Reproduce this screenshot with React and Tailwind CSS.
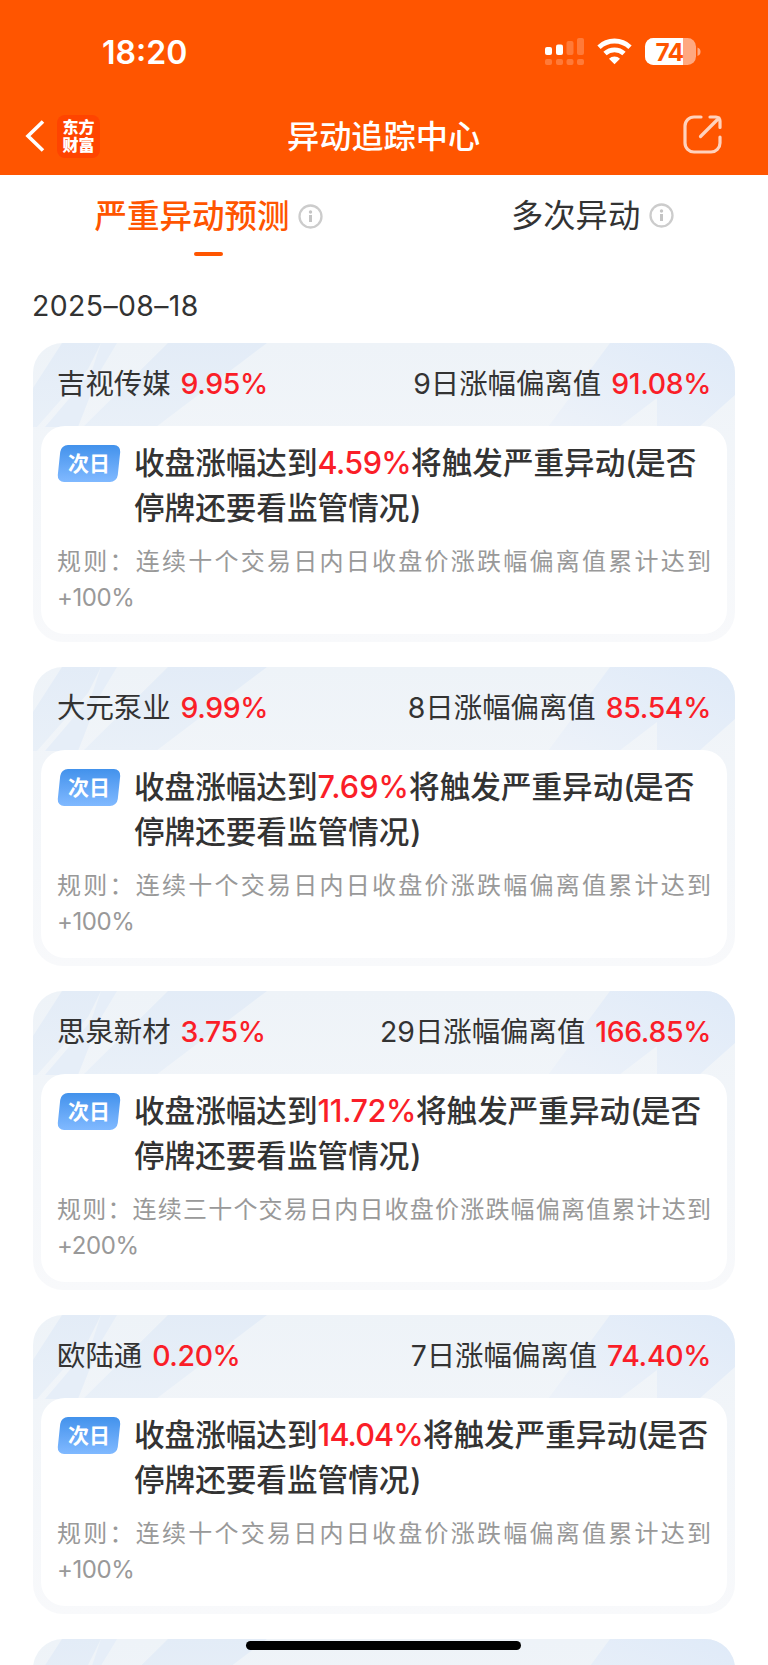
const cards = [
  { name: '吉视传媒', pct: '9.95%', days: '9日', dev: '91.08%', trig: '4.59%', n: '十', lim: '+100%', track: 'tracking-[-0.6px]' },
  { name: '大元泵业', pct: '9.99%', days: '8日', dev: '85.54%', trig: '7.69%', n: '十', lim: '+100%', track: 'tracking-[0.1px]' },
  { name: '思泉新材', pct: '3.75%', days: '29日', dev: '166.85%', trig: '11.72%', n: '三十', lim: '+200%', track: 'tracking-[-0.4px]' },
  { name: '欧陆通', pct: '0.20%', days: '7日', dev: '74.40%', trig: '14.04%', n: '十', lim: '+100%', track: 'tracking-[-0.85px]' },
  { empty: true },
];

function Stripes() {
  return (
    <svg className="absolute left-0 top-0" width="702" height="150" viewBox="0 0 702 150" fill="none">
      <defs>
        <linearGradient id="l" x1="0" y1="0" x2="0" y2="1">
          <stop offset="0" stopColor="#e3ecf7" />
          <stop offset="1" stopColor="#e9f0f8" />
        </linearGradient>
        <linearGradient id="r" x1="1" y1="0" x2="0" y2="1">
          <stop offset="0" stopColor="#dfeaf8" />
          <stop offset="1" stopColor="#edf2f9" />
        </linearGradient>
      </defs>
      <path d="M29 0H68L55 26L4 84H0V45Z" fill="url(#l)" />
      <path d="M68 0H84L66 30L45 84H12L58 30Z" fill="#e6eef8" />
      <path d="M135 0H234L123 84H50Z" fill="url(#l)" />
      <path d="M577 0H702V52L666 84H624V55L586 84H515Z" fill="url(#r)" />
    </svg>
  );
}

function Info() {
  return (
    <svg className="shrink-0" width="25" height="25" viewBox="0 0 25 25" fill="none">
      <circle cx="12.5" cy="12.5" r="11" stroke="#ccc" strokeWidth="2.3" />
      <circle cx="12.5" cy="8" r="1.7" fill="#c4c4c4" />
      <path d="M12.5 11v7" stroke="#c4c4c4" strokeWidth="3" />
    </svg>
  );
}

function Card({ c }) {
  return (
    <section className="relative h-[299.600px] shrink-0 overflow-hidden rounded-[30px] bg-linear-to-b from-[#eef3f8] to-[#f8f9fb] px-2">
      <Stripes />
      {!c.empty && (
        <>
          <header className="relative flex h-[83px] items-center justify-between px-4 pb-[0.500px] text-[28.4px] leading-[40px] text-[#333]">
            <div className="flex gap-[10px]">
              <span>{c.name}</span>
              <span className="font-medium tracking-[-0.4px] text-[#fa1e28]">{c.pct}</span>
            </div>
            <div className="flex gap-[10px]">
              <span>{c.days}涨幅偏离值</span>
              <span className="font-medium tracking-[-0.35px] text-[#fa1e28]">{c.dev}</span>
            </div>
          </header>
          <div className="relative h-[208.400px] rounded-[24px] bg-white px-4 pt-[14px]">
            <div className="flex">
              <div className="relative mt-[5px] flex h-[37px] w-[64px] shrink-0 items-center justify-center">
                <div className="absolute inset-y-0 left-[2px] right-[2px] -skew-x-6 rounded-[7px] bg-linear-to-b from-[#4292ec] to-[#80b9ff]" />
                <span className="relative text-[21px] font-bold leading-[37px] text-white">次日</span>
              </div>
              <p className="ml-[13px] whitespace-nowrap text-[30.6px] font-medium leading-[45px] text-[#333]">
                收盘涨幅达到<span className={`text-[#fa1e28] ${c.track}`}>{c.trig}</span>将触发严重异动<span className="tracking-[-1.500px]">(</span>是否<br />停牌还要看监管情况<span className="ml-px">)</span>
              </p>
            </div>
            <p className="mt-[14.500px] w-[654px] text-justify text-[24px] leading-[36px] text-[#999]">
              规则：连续{c.n}个交易日内日收盘价涨跌幅偏离值累计达到 <span className="tracking-[-0.400px]">{c.lim}</span>
            </p>
          </div>
        </>
      )}
    </section>
  );
}

export default function App() {
  return (
    <div className="relative flex h-[1665px] w-[768px] flex-col overflow-hidden bg-white font-['Inter','Noto_Sans_CJK_SC',sans-serif]">
      <div className="h-[175px] shrink-0 bg-[#ff5500] text-white">
        <div className="flex h-[104px] items-center pl-[102px] pr-[67px]">
          <span className="pt-[2px] text-[32px] font-semibold leading-[40px]">18:20</span>
          <svg className="ml-auto overflow-visible" width="156" height="36" viewBox="0 -4 156 36">
            <g fill="#fff">
              <rect x="0" y="9" width="7" height="8" rx="2" />
              <rect x="11" y="6.500" width="7" height="10.500" rx="2" />
              <g opacity=".22">
                <rect x="21.500" y="3" width="7" height="14" rx="2" />
                <rect x="32" y="0" width="7" height="17" rx="2" />
                <rect x="0" y="21" width="7" height="6" rx="2" />
                <rect x="11" y="21" width="7" height="6" rx="2" />
                <rect x="21.500" y="21" width="7" height="6" rx="2" />
                <rect x="32" y="21" width="7" height="6" rx="2" />
              </g>
            </g>
            <g fill="none" stroke="#fff" strokeWidth="4.800">
              <path d="M54 9.200a22.500 22.500 0 0 1 31 0" />
              <path d="M60 15.500a14 14 0 0 1 19 0" />
            </g>
            <path d="M64 20.800a8 8 0 0 1 11 0L69.500 26.200Z" fill="#fff" />
            <rect x="100" y="0" width="51" height="27" rx="8.500" fill="#ffa880" />
            <path d="M108.500 0H138V27H108.500a8.500 8.500 0 0 1-8.500-8.500V8.500a8.500 8.500 0 0 1 8.500-8.500Z" fill="#fff" />
            <path d="M152.500 9.500a4.500 4.500 0 0 1 0 8.500Z" fill="#ffa880" />
            <text x="124.500" y="22.500" textAnchor="middle" fontSize="24.500" fontWeight="700" letterSpacing="-0.6" fill="#ff5500">74</text>
          </svg>
        </div>
        <div className="flex h-[64px] items-center pl-[25px] pr-[45px]">
          <svg width="20" height="32" viewBox="0 0 20 32" fill="none" stroke="#fff" strokeWidth="3.600">
            <path d="M18 1.500L3 16L18 30.500" />
          </svg>
          <div className="ml-3 flex size-[43px] flex-col items-center justify-center rounded-[8px] bg-[#ff4400] text-[16px] font-black leading-[18px]">
            <span>东方</span>
            <span>财富</span>
          </div>
          <h1 className="ml-[187px] pt-[2px] text-[32.200px] font-medium leading-[44px]">异动追踪中心</h1>
          <svg className="mb-[2px] ml-auto" width="40" height="40" viewBox="0 0 40 40" fill="none" stroke="#ffd2bd" strokeWidth="3.200" strokeLinecap="round">
            <path d="M18 2H11a9 9 0 0 0-9 9v17a9 9 0 0 0 9 9h17a9 9 0 0 0 9-9V22" />
            <path d="M27 2h6a4 4 0 0 1 4 4v6.500M36 3L17.500 21.500" />
          </svg>
        </div>
      </div>
      <nav className="flex h-[84px] shrink-0 pl-[95px] text-[32.300px] leading-[44px]">
        <div className="flex w-[227px] flex-col items-center pt-[18px]">
          <div className="flex items-center gap-[8px] whitespace-nowrap font-medium text-[#ff5500]">
            <span className="pt-[2px] text-[32.500px]">严重异动预测</span>
            <Info />
          </div>
          <div className="mt-[13px] h-1 w-[29px] rounded-full bg-[#ff5500]" />
        </div>
        <div className="ml-[189px] flex h-[44px] items-center gap-[9px] whitespace-nowrap pt-[36px] text-[#333]">
          <span className="pt-[2px]">多次异动</span>
          <Info />
        </div>
      </nav>
      <div className="h-[83.600px] shrink-0 pl-[32px] pt-[27px] text-[28.400px] leading-[40px] tracking-[0.4px] text-[#333]">2025–08–18</div>
      <main className="flex flex-col gap-[24.500px] px-[33px]">
        {cards.map((c, i) => (
          <Card key={i} c={c} />
        ))}
      </main>
      <div className="absolute bottom-[15px] left-[246px] h-[9px] w-[275px] rounded-full bg-black" />
    </div>
  );
}
